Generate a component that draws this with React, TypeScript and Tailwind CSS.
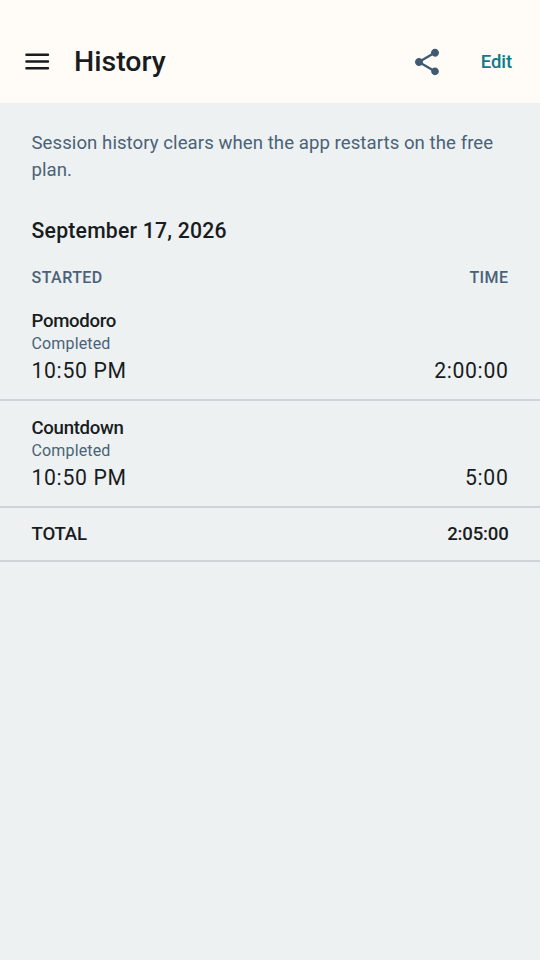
import React from "react";
import { MdShare } from "react-icons/md";

type Session = {
  id: string;
  name: string;
  status: string;
  startedAt: string;
  duration: string;
};

const sessions: Session[] = [
  { id: "1", name: "Pomodoro", status: "Completed", startedAt: "10:50 PM", duration: "2:00:00" },
  { id: "2", name: "Countdown", status: "Completed", startedAt: "10:50 PM", duration: "5:00" },
];

function MenuIcon() {
  return (
    <svg className="size-8" viewBox="0 0 32 32" stroke="currentColor" strokeWidth="2.4" strokeLinecap="round">
      <path d="M5.4 8.8h21.6M5.4 15.5h21.6M5.4 22.2h21.6" />
    </svg>
  );
}

export default function App() {
  return (
    <div className="flex h-screen flex-col bg-[#edf1f2] font-['Roboto',sans-serif] text-[#191c1e]">
      {/* Top bar */}
      <header className="flex h-[103px] shrink-0 items-center bg-[#fffcf7] pt-5 pr-7 pl-[21px]">
        <button type="button" aria-label="Menu">
          <MenuIcon />
        </button>
        <h1 className="ml-[21px] flex-1 pt-0.5 text-[28.5px] font-medium">History</h1>
        <button type="button" aria-label="Share" className="mr-[38px] text-[#3f5a72]">
          <MdShare className="size-8" />
        </button>
        <button type="button" className="pt-0.5 text-[18.5px] font-medium tracking-[-0.1px] text-[#0b7b8a]">
          Edit
        </button>
      </header>

      {/* Sessions */}
      <main>
        <p className="px-[31.5px] pt-[27px] text-[18.6px] leading-[26.5px] tracking-[0.06px] text-[#4a6277]">
          Session history clears when the app restarts on the free plan.
        </p>
        <h2 className="px-[31.5px] pt-[34px] text-[21.2px] leading-[28px] font-medium tracking-[0.23px]">
          September 17, 2026
        </h2>
        <div className="flex justify-between px-[31.5px] pt-[23px] text-base leading-5 font-medium tracking-[0.45px] text-[#4a6277]">
          <span>STARTED</span>
          <span>TIME</span>
        </div>
        <div className="pt-[5.5px]">
          {sessions.map((session) => (
            <div key={session.id} className="flex h-[107px] items-end justify-between border-b-2 border-[#ced5d9] px-[31.5px] pb-3">
              <div>
                <p className="text-[18.6px] leading-6 font-medium tracking-[-0.3px]">{session.name}</p>
                <p className="text-base leading-[22px] tracking-[0.15px] text-[#4a6277]">{session.status}</p>
                <p className="text-[21.2px] leading-8 tracking-[0.65px]">{session.startedAt}</p>
              </div>
              <p className="text-[21.2px] leading-8 tracking-[0.65px]">{session.duration}</p>
            </div>
          ))}
        </div>
        <div className="flex h-[54px] items-center justify-between border-b-2 border-[#ced5d9] px-[31.5px] pt-0.5 text-[18.6px] font-medium tracking-[-0.2px]">
          <span>TOTAL</span>
          <span>2:05:00</span>
        </div>
      </main>
    </div>
  );
}
